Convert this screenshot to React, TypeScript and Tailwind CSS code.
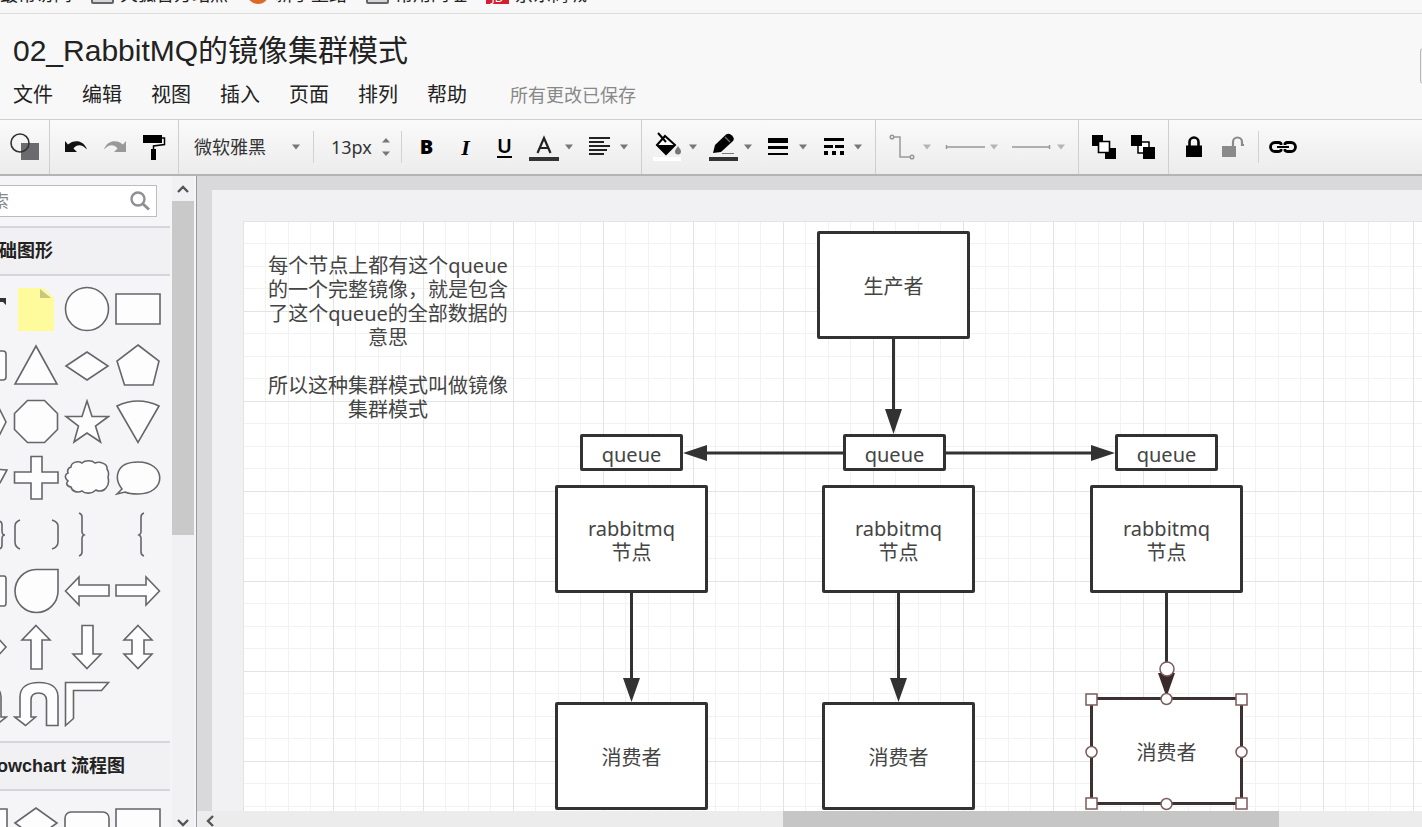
import type { ReactNode } from "react";

const menus = ["文件", "编辑", "视图", "插入", "页面", "排列", "帮助"];

const bookmarks = [
  { label: "最常访问", icon: "none" },
  { label: "火狐官方站点", icon: "page" },
  { label: "新手上路", icon: "fox" },
  { label: "常用网址", icon: "page" },
  { label: "京东商城", icon: "jd" },
];

const BookmarkIcon = ({ kind }: { kind: string }) => {
  if (kind === "page") return <span className="h-5 w-[23px] rounded-[2px] border-2 border-[#666] bg-[#d4d6d9]" />;
  if (kind === "fox") return <span className="h-[22px] w-[22px] rounded-full bg-[#dd6a2c]" />;
  if (kind === "jd")
    return (
      <span className="flex h-[22px] w-[23px] items-end justify-center bg-[#d3202f] text-xs leading-3 text-white">
        JD
      </span>
    );
  return null;
};

const Caret = ({ faded }: { faded?: boolean }) => (
  <svg width="8" height="6" viewBox="0 0 8 6" className="shrink-0">
    <path d="M0 .5h8L4 5.5z" fill={faded ? "#b5b5b5" : "#777"} />
  </svg>
);

const Group = ({ className, children }: { className?: string; children: ReactNode }) => (
  <div className={`flex h-full shrink-0 items-center border-r border-[#cfcfd2] ${className ?? ""}`}>{children}</div>
);

const Divider = () => <span className="h-8 w-px shrink-0 bg-[#d2d2d4]" />;

const IconButton = ({ label, children }: { label: string; children: ReactNode }) => (
  <button type="button" aria-label={label} className="flex h-10 w-[39px] shrink-0 items-center justify-center">
    {children}
  </button>
);

const DropButton = ({ label, children }: { label: string; children: ReactNode }) => (
  <button type="button" aria-label={label} className="flex h-10 w-11 shrink-0 items-center gap-[6px]">
    <svg width="30" height="32" viewBox="0 0 30 32" className="shrink-0">
      {children}
    </svg>
    <Caret />
  </button>
);

const Toolbar = () => (
  <div className="flex h-[57px] shrink-0 overflow-hidden border-t border-b-2 border-t-[#d0d0d2] border-b-[#b4b4b7] bg-linear-to-b from-[#fafafb] to-[#ececed]">
    <Group className="w-[50px] pl-[9px]">
      <button type="button" aria-label="图形">
        <svg width="31" height="28" viewBox="0 0 31 28">
          <path d="M12 10h18v17H12z" fill="#6b6b6e" />
          <circle cx="11" cy="10" r="9" fill="none" stroke="#333" strokeWidth="1.6" />
        </svg>
      </button>
    </Group>

    <Group className="pr-[5px] pl-[6px]">
      <IconButton label="撤销">
        <svg width="24" height="16" viewBox="0 0 24 16">
          <path d="M1 2l3 3.500C10 0 20 1 23 10.500 18 5 13 5 9.500 9.500L13 13H1z" fill="#111" />
        </svg>
      </IconButton>
      <IconButton label="恢复">
        <svg width="24" height="16" viewBox="0 0 24 16">
          <path d="M23 2l-3 3.500C14 0 4 1 1 10.500 6 5 11 5 14.500 9.500L11 13h12z" fill="#999" />
        </svg>
      </IconButton>
      <IconButton label="格式刷">
        <svg width="24" height="26" viewBox="0 0 24 26">
          <path d="M1 1h19v8H1zM9 15h5v11H9z" fill="#000" />
          <path d="M20 4h2.500v6.500L11.500 12v4" fill="none" stroke="#000" strokeWidth="1.500" />
        </svg>
      </IconButton>
    </Group>

    <Group className="pr-[13px] pl-[15px]">
      <label className="flex w-[108px] items-center">
        <select
          aria-label="字体"
          className="w-[98px] appearance-none bg-transparent text-lg leading-6 text-[#333]"
        >
          <option>微软雅黑</option>
        </select>
        <Caret />
      </label>
      <span className="w-[11px]" />
      <Divider />
      <input
        aria-label="字号"
        defaultValue="13px"
        className="ml-[17px] w-[50px] bg-transparent text-lg leading-6 text-[#333]"
      />
      <svg width="10" height="20" viewBox="0 0 10 20">
        <path d="M1 5.500h8L5 1zM1 14.500h8L5 19z" fill="#777" />
      </svg>
      <span className="w-[10px]" />
      <Divider />
      <span className="flex px-[5px]">
        <IconButton label="粗体">
          <span className="font-['Noto_Sans'] text-xl font-black text-black">B</span>
        </IconButton>
        <IconButton label="斜体">
          <span className="font-['Liberation_Serif'] text-[22px] font-bold text-black italic">I</span>
        </IconButton>
        <IconButton label="下划线">
          <span className="border-b-2 border-black font-['Noto_Sans'] text-xl leading-5 font-semibold text-black">
            U
          </span>
        </IconButton>
      </span>
      <span className="flex gap-[11px]">
        <DropButton label="文字颜色">
          <path d="M8.500 22L15 7l6.500 15M11 17h8" fill="none" stroke="#222" strokeWidth="2.200" />
          <path d="M0 26h30v4H0z" fill="#333" />
        </DropButton>
        <DropButton label="对齐">
          <path d="M5 7h21M5 11h15M5 15h21M5 19h18M5 23h15" stroke="#222" strokeWidth="1.800" />
        </DropButton>
      </span>
    </Group>

    <Group className="gap-[11px] pr-[13px] pl-[11px]">
      <DropButton label="填充">
        <path d="M0 26h28v4H0z" fill="#fff" />
        <path d="M4 14L12 5l10 9-9 9z" fill="#fff" stroke="#000" strokeWidth="2" />
        <path d="M3 14h19l-9 9.500z" fill="#000" />
        <path d="M5 2l8 9" stroke="#000" strokeWidth="2" />
        <path d="M25 15c2 3 3 4 3 5.500a3 3 0 01-6 0c0-1.500 1-2.500 3-5.500z" fill="#777" />
      </DropButton>
      <DropButton label="线条颜色">
        <path d="M5 22l2-8L18 3.500q3-2 6 1t1 5.500L13 21z" fill="#000" />
        <path d="M17 6l5 5" stroke="#777" strokeWidth="1.200" />
        <path d="M14 22.500h12" stroke="#777" />
        <path d="M1 26h30v4H1z" fill="#333" />
      </DropButton>
      <DropButton label="线条宽度">
        <path d="M5 7h20v5H5zM5 15h20v3H5zM5 22h20v2H5z" fill="#000" />
      </DropButton>
      <DropButton label="线条样式">
        <path d="M6 7h20v3H6zM6 14h9v3H6zM17 14h9v3h-9zM6 20h4v4H6zM14 20h4v4h-4zM22 20h4v4h-4z" fill="#000" />
      </DropButton>
    </Group>

    <Group className="gap-[14px] pr-[13px] pl-[11px]">
      <button type="button" aria-label="连线类型" disabled className="flex items-center gap-[6px]">
        <svg width="30" height="28" viewBox="0 0 30 28" fill="none" stroke="#999" strokeWidth="1.500">
          <path d="M7 4h6v20h10" />
          <circle cx="5" cy="4" r="1.800" />
          <circle cx="25" cy="24" r="1.800" />
        </svg>
        <Caret faded />
      </button>
      <button type="button" aria-label="起点" disabled className="flex items-center gap-[5px]">
        <svg width="40" height="8" viewBox="0 0 40 8" fill="none" stroke="#999" strokeWidth="1.500">
          <path d="M1 4h39M1.500 2v4" />
        </svg>
        <Caret faded />
      </button>
      <button type="button" aria-label="终点" disabled className="flex items-center gap-[5px]">
        <svg width="40" height="8" viewBox="0 0 40 8" fill="none" stroke="#999" strokeWidth="1.500">
          <path d="M0 4h38M37.500 2v4" />
        </svg>
        <Caret faded />
      </button>
    </Group>

    <Group className="pr-[6px] pl-[5px]">
      <IconButton label="置于顶层">
        <svg width="24" height="24" viewBox="0 0 24 24">
          <path d="M0 0h11v11H0zM13 13h11v11H13z" fill="#000" />
          <path d="M6.500 6.500h11v11h-11z" fill="#fff" stroke="#000" strokeWidth="1.600" />
        </svg>
      </IconButton>
      <IconButton label="置于底层">
        <svg width="24" height="24" viewBox="0 0 24 24">
          <path d="M7 7h11v11H7z" fill="#fff" stroke="#000" strokeWidth="1.500" />
          <path d="M0 0h11v11H0zM12 12h12v12H12z" fill="#000" />
        </svg>
      </IconButton>
    </Group>

    <div className="flex h-full shrink-0 items-center pl-[5px]">
      <IconButton label="锁定">
        <svg width="18" height="22" viewBox="0 0 18 22">
          <path d="M4.500 10V6a4.500 4.500 0 019 0v4" fill="none" stroke="#000" strokeWidth="2.600" />
          <path d="M1 9.500h16V21H1z" fill="#000" />
        </svg>
      </IconButton>
      <IconButton label="解锁">
        <svg width="24" height="22" viewBox="0 0 24 22">
          <path d="M12 10V6a4.500 4.500 0 019 0v3h2" fill="none" stroke="#8a8a8a" strokeWidth="2.200" />
          <path d="M1 10h14v11H1z" fill="#8a8a8a" />
        </svg>
      </IconButton>
      <span className="w-[6px]" />
      <Divider />
      <span className="w-[4px]" />
      <IconButton label="链接">
        <svg width="28" height="14" viewBox="0 0 28 14" fill="none" stroke="#000" strokeWidth="2.800">
          <path d="M12 5V3.500Q11 2.500 9.500 2.500H6a4.500 4.500 0 000 9h3.500Q11 11.500 12 10.500V9M16 5V3.500q1-1 2.500-1H22a4.500 4.500 0 010 9h-3.500q-1.500 0-2.500-1V9" />
          <path d="M8 7h12" strokeWidth="2" />
        </svg>
      </IconButton>
    </div>
  </div>
);

const Shape = ({ children }: { children?: ReactNode }) => (
  <div className="flex items-center justify-center">
    <svg width="46" height="46" viewBox="0 0 46 46" fill="#fdfdfe" stroke="#66666a" strokeWidth="1.600">
      {children}
    </svg>
  </div>
);

const BasicShapes = () => (
  <div className="px-[10px] pt-[5px] pb-[9px]">
    <div className="grid h-[451px] w-[204px] grid-cols-4 grid-rows-8">
      <Shape>
        <path d="M1 12h43v7l-3-3H27v26h-8V16H1z" fill="#333" stroke="none" />
      </Shape>
      <Shape>
        <path d="M5 2h25l11 10v33H5z" fill="#fdfb9c" stroke="none" />
        <path d="M27 3v9h11z" fill="#c9c67e" stroke="none" />
      </Shape>
      <Shape>
        <circle cx="23" cy="23" r="21.500" />
      </Shape>
      <Shape>
        <path d="M1 8h44v30H1z" />
      </Shape>

      <Shape>
        <rect x="1" y="8" width="43" height="29" rx="3" />
      </Shape>
      <Shape>
        <path d="M23 3l21 38H2z" />
      </Shape>
      <Shape>
        <path d="M2 23L23 9l21 14-21 14z" />
      </Shape>
      <Shape>
        <path d="M23 2l21 16-6 24H9.500L2 18z" />
      </Shape>

      <Shape>
        <path d="M2 23L12 5h23l9 18-9 18H12z" />
      </Shape>
      <Shape>
        <path d="M14.500 1.500h17l13 13v16l-13 13h-17l-13-13v-16z" />
      </Shape>
      <Shape>
        <path d="M23 2l5 15.500h16.500l-13 9.500 5 16L23 34 10 43l4.500-16L2 17.500h16z" />
      </Shape>
      <Shape>
        <path d="M2 7q21-10 42 0L23 43.500z" />
      </Shape>

      <Shape>
        <path d="M8 38L1 17q22-4 44-2l-6 11-7 12z" />
      </Shape>
      <Shape>
        <path d="M18 1.500h11V17h16v11H29v16H18V28H1.500V17H18z" />
      </Shape>
      <Shape>
        <path d="M7 12c0-4 6-7 11-4 3-3 10-3 13 0 5-2 13 1 12 6 2 3 2 5 1 8 1 4 1 8-2 11-2 3-7 4-10 2-4 4-11 4-14 1-4 2-10 1-11-4C2 31 2 28 4 26c-4-3-3-7 0-8-1-3 0-5 3-6z" />
      </Shape>
      <Shape>
        <path d="M2 39l5-5C-1 24 0 7 23 7c29 0 29 32 0 32q-9 0-13-2z" />
      </Shape>

      <Shape>
        <path d="M36 9q4 0 4 4v6q0 4 3 4-3 0-3 4v6q0 4-4 4" fill="none" />
      </Shape>
      <Shape>
        <path d="M7 8q-5 2-5 6v16q0 5 5 7M39 8q6 2 6 6v16q0 5-6 7" fill="none" />
      </Shape>
      <Shape>
        <path d="M15 1q3 1 3 4v15q0 2 2 3-2 1-2 3v14q0 3-3 4" fill="none" />
      </Shape>
      <Shape>
        <path d="M29 1q-3 1-3 4v15q0 2-2 3 2 1 2 3v14q0 3 3 4" fill="none" />
      </Shape>

      <Shape>
        <path d="M1 8h41q2 0 2 3v24q0 3-2 3H1z" />
      </Shape>
      <Shape>
        <path d="M23 1.500h22V23A21.500 21.500 0 1123 1.500z" />
      </Shape>
      <Shape>
        <path d="M1.500 23L15 9v8h30v11H15v9z" />
      </Shape>
      <Shape>
        <path d="M44.500 23L31 9v8H1v11h30v9z" />
      </Shape>

      <Shape>
        <path d="M2 23l10-11v7h22v-7l10 11-10 11v-7H12v7z" />
      </Shape>
      <Shape>
        <path d="M23 1.500L37 16h-8v29H18V16H9z" />
      </Shape>
      <Shape>
        <path d="M23 44.500L37 30h-8V1.500H18V30H9z" />
      </Shape>
      <Shape>
        <path d="M23 1.500L37 16h-8v14h8L23 44.500 9 30h8V16H9z" />
      </Shape>

      <Shape>
        <path d="M1 45V16C1 6 8 1 19 1s20 6 20 15v20h5.500L34 44l-10-8h4V17q0-5-8-5t-8 5v28z" />
      </Shape>
      <Shape>
        <path d="M45 44.500V16C45 6 37 1.500 26 1.500S7 6 7 16v20H1.500l11 8.500 10-8.500H18V19q0-7 7.500-7t8 7v25.500z" />
      </Shape>
      <Shape>
        <path d="M1.500 1.500h43l-7 8H9.500v28l-8 7z" />
      </Shape>
    </div>
  </div>
);

const FlowchartShapes = () => (
  <div className="grid w-[224px] grid-cols-[51px_51px_51px_51px] grid-rows-[56px] px-[10px] pt-[5px]">
    <Shape>
      <path d="M1 8h44v30H1z" />
    </Shape>
    <Shape>
      <path d="M2 22L23 7l21 15-21 15z" />
    </Shape>
    <Shape>
      <rect x="1" y="11" width="44" height="28" rx="6" />
    </Shape>
    <Shape>
      <path d="M1 8h44v30H1z" />
    </Shape>
  </div>
);

const SectionTitle = ({ children }: { children: ReactNode }) => (
  <h2 className="flex h-[50px] items-center border-y-2 border-[#d6d6da] bg-[#f1f1f3] pl-8 font-['Liberation_Sans','Noto_Sans_CJK_SC',sans-serif] text-lg leading-6 font-bold whitespace-nowrap text-[#222]">
    {children}
  </h2>
);

const Chevron = ({ d }: { d: string }) => (
  <svg width="12" height="12" viewBox="0 0 12 12" fill="none" stroke="#555" strokeWidth="2.400">
    <path d={d} />
  </svg>
);

const Sidebar = () => (
  <aside className="flex w-[197px] shrink-0 overflow-hidden border-r border-[#9b9ba3] bg-[#f5f5f8]">
    <div className="-ml-[51px] w-[221px] shrink-0 overflow-hidden">
      <div className="pt-[9px] pr-[13px] pb-[9px] pl-5">
        <label className="flex h-8 items-center border border-[#bcbcc0] bg-white pr-1 pl-[3px]">
          <input
            type="search"
            placeholder="搜索"
            aria-label="搜索"
            className="min-w-0 flex-1 bg-transparent text-lg leading-6 placeholder:text-[#888]"
          />
          <svg width="24" height="24" viewBox="0 0 24 24" fill="none" stroke="#909094">
            <circle cx="10" cy="10" r="6.500" strokeWidth="2.400" />
            <path d="M15 15l6 5.500" strokeWidth="3" />
          </svg>
        </label>
      </div>
      <SectionTitle>基础图形</SectionTitle>
      <BasicShapes />
      <SectionTitle>Flowchart 流程图</SectionTitle>
      <FlowchartShapes />
    </div>
    <div className="ml-[2px] flex w-[22px] shrink-0 flex-col bg-[#f1f1f4]">
      <button type="button" aria-label="向上滚动" className="flex h-[25px] shrink-0 items-center justify-center">
        <Chevron d="M1 9l5-5 5 5" />
      </button>
      <div className="h-[334px] bg-[#c9c9ca]" />
      <button type="button" aria-label="向下滚动" className="mt-auto flex h-[8px] shrink-0 items-center justify-center">
        <Chevron d="M1 3l5 5 5-5" />
      </button>
    </div>
  </aside>
);

const nodes = [
  { text: "生产者", place: "left-[574px] top-[10px] w-[153px] h-[108px]" },
  { text: "queue", place: "left-[337px] top-[213px] w-[103px] h-[37px]" },
  { text: "queue", place: "left-[600px] top-[213px] w-[103px] h-[37px]" },
  { text: "queue", place: "left-[872px] top-[213px] w-[103px] h-[37px]" },
  { text: "rabbitmq\n节点", place: "left-[312px] top-[264px] w-[153px] h-[108px]" },
  { text: "rabbitmq\n节点", place: "left-[579px] top-[264px] w-[153px] h-[108px]" },
  { text: "rabbitmq\n节点", place: "left-[847px] top-[264px] w-[153px] h-[108px]" },
  { text: "消费者", place: "left-[312px] top-[481px] w-[153px] h-[108px]" },
  { text: "消费者", place: "left-[579px] top-[481px] w-[153px] h-[108px]" },
  { text: "消费者", place: "left-[847px] top-[476px] w-[153px] h-[108px]" },
];

const Diagram = () => (
  <div className="relative h-full overflow-hidden bg-white">
    <svg className="absolute inset-0 h-full w-full">
      <defs>
        <pattern id="grid" width="90" height="90" patternUnits="userSpaceOnUse">
          <path d="M22.500 0v90M45.500 0v90M67.500 0v90M0 22.500h90M0 45.500h90M0 67.500h90" stroke="#f2f2f2" />
          <path d="M.5 0v90M0 .5h90" stroke="#e3e3e3" />
        </pattern>
      </defs>
      <rect width="100%" height="100%" fill="url(#grid)" />
      <g stroke="#323232" strokeWidth="3">
        <path d="M650.500 117v75M600 232H463M702 232h147M388.500 371v88M655.500 371v88M923.500 371v84" />
      </g>
      <g fill="#323232">
        <path d="M642 188h17l-8.500 25zM464 224v16l-24-8zM848 224v16l24-8zM380 457h17l-8.500 24zM647 457h17l-8.500 24z" />
        <path d="M915 452h17l-8.500 24z" fill="#3b2a2a" />
      </g>
    </svg>

    <p className="absolute top-[33px] left-[20px] w-[250px] text-center text-xl leading-6 text-[#444]">
      每个节点上都有这个queue
      <br />
      的一个完整镜像，就是包含
      <br />
      了这个queue的全部数据的
      <br />
      意思
      <br />
      <br />
      所以这种集群模式叫做镜像
      <br />
      集群模式
    </p>

    {nodes.map((node) => (
      <div
        key={node.place}
        className={`absolute flex items-center justify-center rounded-[2px] border-3 border-[#323232] bg-white pt-1 text-center text-xl leading-6 whitespace-pre-line text-[#444] ${node.place}`}
      >
        {node.text}
      </div>
    ))}

    {/* selection handles of the last node */}
    <svg
      className="absolute top-[438px] left-[837px]"
      width="173"
      height="152"
      viewBox="0 0 173 152"
      fill="#fff"
      stroke="#7d5a5c"
      strokeWidth="1.500"
    >
      <path d="M11.500 40h150v105h-150z" fill="none" stroke="#4c2f30" strokeWidth="1" />
      <circle cx="87" cy="10" r="7" />
      <circle cx="86.500" cy="40" r="5.500" />
      <circle cx="11.500" cy="93" r="5.500" />
      <circle cx="161.500" cy="93" r="5.500" />
      <circle cx="86.500" cy="145" r="5.500" />
      <path d="M6 35h11v11H6zM156 35h11v11h-11zM6 139h11v11H6zM156 139h11v11h-11z" />
    </svg>
  </div>
);

const App = () => {
  return (
    <div className="flex h-screen flex-col overflow-hidden bg-[#f8f8f8] font-['Noto_Sans','Noto_Sans_CJK_SC',sans-serif] text-[#222]">
      {/* Browser bookmarks */}
      <nav className="flex h-[14px] shrink-0 items-end gap-[19px] overflow-hidden border-b border-[#dcdcde] pb-[9px] text-lg leading-5">
        {bookmarks.map((b) => (
          <a key={b.label} href="#" className="flex shrink-0 items-end gap-[6px] whitespace-nowrap">
            <BookmarkIcon kind={b.icon} />
            {b.label}
          </a>
        ))}
      </nav>

      <header className="flex h-[105px] shrink-0 items-start justify-between overflow-hidden">
        <div className="pl-[13px]">
          <h1 className="pt-[17px] font-['Liberation_Sans','Noto_Sans_CJK_SC',sans-serif] text-3xl leading-10">
            02_RabbitMQ的镜像集群模式
          </h1>
          <div className="flex items-center pt-[10px] text-xl leading-7">
            {menus.map((m) => (
              <button key={m} type="button" className="mr-[29px]">
                {m}
              </button>
            ))}
            <span className="pl-[14px] text-lg leading-7 text-[#888]">所有更改已保存</span>
          </div>
        </div>
        <button
          type="button"
          aria-label="分享"
          className="mt-[34px] -mr-[38px] h-9 w-10 shrink-0 rounded-[3px] border border-[#b9b9b9] bg-[#eee]"
        />
      </header>

      <Toolbar />

      <div className="flex min-h-0 flex-1">
        <Sidebar />
        <main className="flex min-w-0 flex-1 flex-col">
          <div className="min-h-0 flex-1 bg-[#d9d9dc] pt-[14px] pl-[15px]">
            <div className="h-full bg-[#f1f1f3] pt-[31px] pl-[31px]">
              <Diagram />
            </div>
          </div>
          <div className="flex h-4 shrink-0 bg-[#ececed]">
            <button type="button" aria-label="向左滚动" className="flex w-[25px] items-end justify-center">
              <Chevron d="M9 1L4 6l5 5" />
            </button>
            <div className="w-[561px]" />
            <div className="w-[496px] bg-[#c6c6c7]" />
          </div>
        </main>
      </div>
    </div>
  );
};

export default App;
